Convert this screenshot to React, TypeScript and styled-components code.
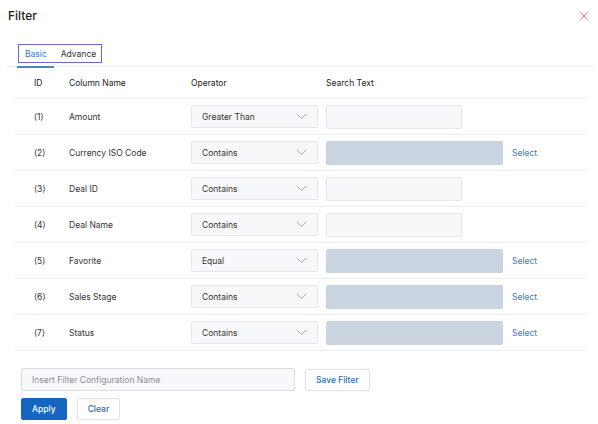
import * as React from 'react';
import styled, { createGlobalStyle } from 'styled-components';
import { ChevronDown } from 'lucide-react';

const GlobalStyle = createGlobalStyle`
    body {
        margin: 0;
        background: #fff;
        font-family: Inter, "Noto Sans", sans-serif;
        color: #333;
    }
`;

const Dialog = styled.div`
    width: 598px;
    height: 424px;
    box-sizing: border-box;
    padding: 0 5px 0 7px;
    display: flex;
    flex-direction: column;
`;

const Header = styled.div`
    height: 31px;
    display: flex;
    align-items: center;
    justify-content: space-between;
    padding: 0 4px 0 1px;
`;

const Title = styled.div`
    font-size: 12px;
    font-weight: 500;
    color: #222;
`;

const Close = styled.span`
    display: flex;
    cursor: pointer;
`;

const TabBar = styled.div`
    margin-top: 13px;
    display: flex;
    border-bottom: 1px solid #eceef1;
    padding-left: 11px;
`;

const TabGroup = styled.div`
    display: flex;
    gap: 3px;
    border: 1.5px solid #6b66dc;
    margin-bottom: 3px;
    height: 19px;
    box-sizing: border-box;
`;

const Tab = styled.div<{ $active?: boolean }>`
    font-size: 8.5px;
    display: flex;
    align-items: center;
    padding: 0 5px 0 6px;
    color: ${(p) => (p.$active ? '#3a78c0' : '#333')};
    position: relative;
    &::after {
        content: '';
        display: ${(p) => (p.$active ? 'block' : 'none')};
        position: absolute;
        left: -2px;
        right: -2px;
        bottom: -6px;
        height: 2px;
        background: #4a86c5;
    }
`;

const Table = styled.div`
    margin: 0 7px 0 6px;
`;

const Row = styled.div<{ $head?: boolean }>`
    display: grid;
    grid-template-columns: 56px 122px 135px 1fr;
    align-items: center;
    height: ${(p) => (p.$head ? '31px' : '35px')};
    border-bottom: 1px solid #eceef1;
    font-size: 8.5px;
    color: ${(p) => (p.$head ? '#222' : '#333')};
`;

const IdCell = styled.div`
    padding-left: 21px;
`;

const SelectBox = styled.div`
    width: 127px;
    height: 23px;
    box-sizing: border-box;
    border: 1px solid #e4e7eb;
    border-radius: 2px;
    background: #f7f8fa;
    display: flex;
    align-items: center;
    justify-content: space-between;
    padding: 0 7px 0 10px;
    color: #333;
    svg {
        color: #7d838b;
    }
`;

const SearchCell = styled.div`
    display: flex;
    align-items: center;
    gap: 9px;
`;

const TextInput = styled.div<{ $locked?: boolean }>`
    width: ${(p) => (p.$locked ? '177px' : '136px')};
    height: 24px;
    box-sizing: border-box;
    border: 1px solid ${(p) => (p.$locked ? '#c9d3df' : '#e4e7eb')};
    border-radius: 2px;
    background: ${(p) => (p.$locked ? '#cbd5e1' : '#f7f8fa')};
`;

const Link = styled.span`
    color: #3a78c0;
    font-size: 8.5px;
`;

const Footer = styled.div`
    padding: 17px 0 0 14px;
    display: flex;
    flex-direction: column;
    gap: 7px;
`;

const FooterRow = styled.div`
    display: flex;
    align-items: center;
    gap: 10px;
`;

const NameInput = styled.input`
    width: 274px;
    height: 23px;
    box-sizing: border-box;
    border: 1px solid #d8dce1;
    border-radius: 2px;
    background: #f7f8fa;
    padding: 0 10px;
    font-family: inherit;
    font-size: 8.5px;
    outline: none;
    &::placeholder {
        color: #8a8f96;
    }
`;

const Button = styled.button<{ $primary?: boolean }>`
    height: 22px;
    box-sizing: border-box;
    padding: 0 10px;
    border-radius: 2px;
    font-family: inherit;
    font-size: 8.5px;
    font-weight: 500;
    border: 1px solid ${(p) => (p.$primary ? '#1565c0' : '#dde1e6')};
    background: ${(p) => (p.$primary ? '#1565c0' : '#fff')};
    color: ${(p) => (p.$primary ? '#fff' : '#2f6aad')};
    cursor: pointer;
`;

interface IFilterRow {
    id: number;
    column: string;
    operator: string;
    picker: boolean;
}

const rows: IFilterRow[] = [
    { id: 1, column: 'Amount', operator: 'Greater Than', picker: false },
    { id: 2, column: 'Currency ISO Code', operator: 'Contains', picker: true },
    { id: 3, column: 'Deal ID', operator: 'Contains', picker: false },
    { id: 4, column: 'Deal Name', operator: 'Contains', picker: false },
    { id: 5, column: 'Favorite', operator: 'Equal', picker: true },
    { id: 6, column: 'Sales Stage', operator: 'Contains', picker: true },
    { id: 7, column: 'Status', operator: 'Contains', picker: true },
];

export default function App() {
    return (
        <React.Fragment>
            <GlobalStyle />
            <Dialog>
                <Header>
                    <Title>Filter</Title>
                    <Close>
                        <svg width="10" height="10" viewBox="0 0 10 10">
                            <path d="M0.5 0.5 L9.5 9.5 M9.5 0.5 L0.5 9.5" stroke="#f08686" strokeWidth="1" fill="none" />
                        </svg>
                    </Close>
                </Header>
                <TabBar>
                    <TabGroup>
                        <Tab $active>Basic</Tab>
                        <Tab>Advance</Tab>
                    </TabGroup>
                </TabBar>
                <Table>
                    <Row $head>
                        <IdCell>ID</IdCell>
                        <div>Column Name</div>
                        <div>Operator</div>
                        <div>Search Text</div>
                    </Row>
                    {rows.map((row) => (
                        <Row key={row.id}>
                            <IdCell>({row.id})</IdCell>
                            <div>{row.column}</div>
                            <SelectBox>
                                {row.operator}
                                <ChevronDown size={17} strokeWidth={1} />
                            </SelectBox>
                            <SearchCell>
                                <TextInput $locked={row.picker} />
                                {row.picker && <Link>Select</Link>}
                            </SearchCell>
                        </Row>
                    ))}
                </Table>
                <Footer>
                    <FooterRow>
                        <NameInput placeholder="Insert Filter Configuration Name" />
                        <Button>Save Filter</Button>
                    </FooterRow>
                    <FooterRow>
                        <Button $primary>Apply</Button>
                        <Button>Clear</Button>
                    </FooterRow>
                </Footer>
            </Dialog>
        </React.Fragment>
    );
}
